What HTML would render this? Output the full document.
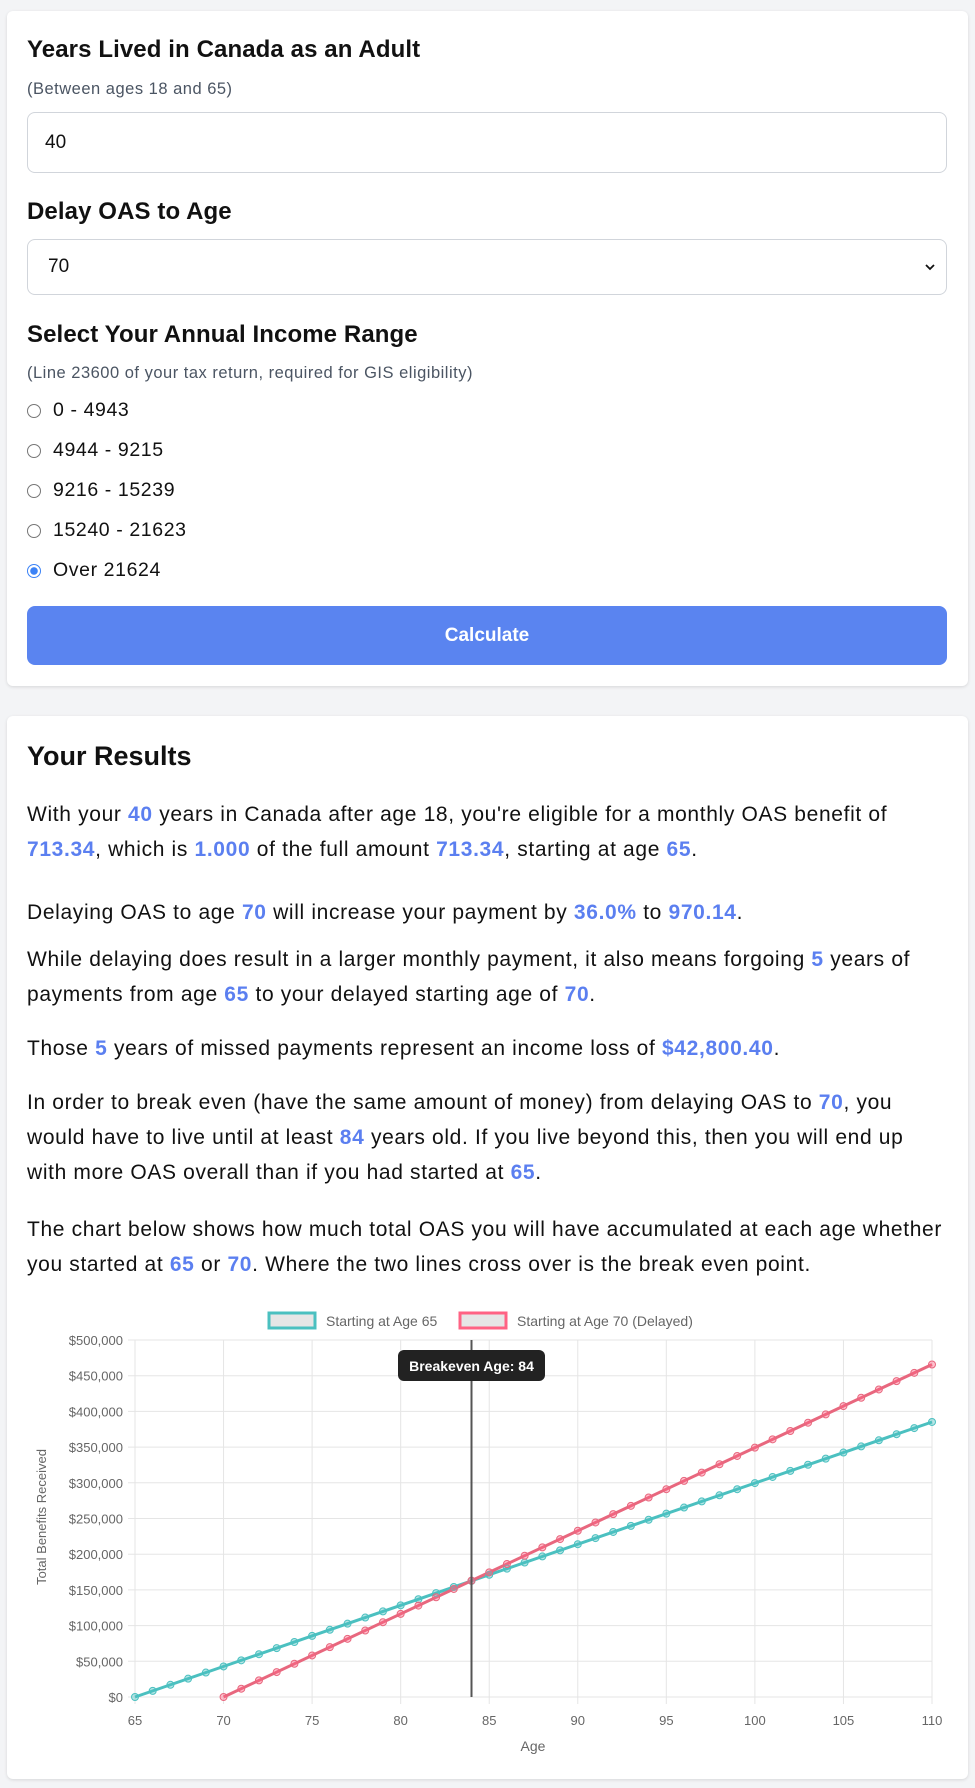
<!DOCTYPE html>
<html><head><meta charset="utf-8">
<style>
*{box-sizing:border-box;margin:0;padding:0}
body{width:975px;height:1788px;background:#f3f4f6;font-family:"Liberation Sans",Arial,sans-serif;color:#111;position:relative;overflow:hidden}
.card{position:absolute;left:7px;width:961px;background:#fff;border-radius:6px;box-shadow:0 1px 3px rgba(0,0,0,.12)}
.abs{position:absolute}
h2{font-size:24px;font-weight:700;color:#111;letter-spacing:0.1px}
.sub{font-size:16.5px;color:#4b5563;letter-spacing:0.5px}
.inp{position:absolute;left:27px;width:920px;border:1px solid #d1d5db;border-radius:8px;background:#fff;font-size:19px;padding-left:16px;display:flex;align-items:center}
.radio{position:absolute;left:27px;font-size:19.5px;letter-spacing:0.6px;display:flex;align-items:center}
.radio i{display:inline-block;width:14px;height:14px;border:1px solid #767676;border-radius:50%;margin-right:12px;background:#fff}
.radio i.on{border:1.5px solid #3b82f6;background:radial-gradient(circle,#3b82f6 0 3.5px,#fff 4px)}
.btn{position:absolute;left:27px;top:606px;width:920px;height:59px;background:#5a84f0;border-radius:8px;color:#fff;font-weight:700;font-size:19px;display:flex;align-items:center;justify-content:center}
p{position:absolute;left:27px;width:940px;font-size:21px;letter-spacing:0.65px;line-height:35px;color:#111;white-space:nowrap}
b{color:#5b7ff0}
</style></head><body>
<div class="card" style="top:11px;height:675px"></div>
<div class="abs" style="left:27px;top:36px"><h2>Years Lived in Canada as an Adult</h2></div>
<div class="abs sub" style="left:27px;top:80px">(Between ages 18 and 65)</div>
<div class="inp" style="top:112px;height:61px;padding-left:17px">40</div>
<div class="abs" style="left:27px;top:198px"><h2>Delay OAS to Age</h2></div>
<div class="inp" style="top:239px;height:56px;padding-left:20px">70<svg style="position:absolute;right:10px;top:22px" width="12" height="10"><path d="M2 3l4 4 4-4" stroke="#111" stroke-width="1.8" fill="none"/></svg></div>
<div class="abs" style="left:27px;top:321px"><h2>Select Your Annual Income Range</h2></div>
<div class="abs sub" style="left:27px;top:364px">(Line 23600 of your tax return, required for GIS eligibility)</div>
<div class="radio" style="top:399px"><i></i>0 - 4943</div>
<div class="radio" style="top:439px"><i></i>4944 - 9215</div>
<div class="radio" style="top:479px"><i></i>9216 - 15239</div>
<div class="radio" style="top:519px"><i></i>15240 - 21623</div>
<div class="radio" style="top:559px"><i class="on"></i>Over 21624</div>
<div class="btn">Calculate</div>

<div class="card" style="top:716px;height:1063px"></div>
<div class="abs" style="left:27px;top:741px;font-size:27px;font-weight:700">Your Results</div>
<p style="top:797px">With your <b>40</b> years in Canada after age 18, you're eligible for a monthly OAS benefit of<br><b>713.34</b>, which is <b>1.000</b> of the full amount <b>713.34</b>, starting at age <b>65</b>.</p>
<p style="top:895px">Delaying OAS to age <b>70</b> will increase your payment by <b>36.0%</b> to <b>970.14</b>.</p>
<p style="top:942px">While delaying does result in a larger monthly payment, it also means forgoing <b>5</b> years of<br>payments from age <b>65</b> to your delayed starting age of <b>70</b>.</p>
<p style="top:1031px">Those <b>5</b> years of missed payments represent an income loss of <b>$42,800.40</b>.</p>
<p style="top:1085px">In order to break even (have the same amount of money) from delaying OAS to <b>70</b>, you<br>would have to live until at least <b>84</b> years old. If you live beyond this, then you will end up<br>with more OAS overall than if you had started at <b>65</b>.</p>
<p style="top:1212px">The chart below shows how much total OAS you will have accumulated at each age whether<br>you started at <b>65</b> or <b>70</b>. Where the two lines cross over is the break even point.</p>

<svg id="ch" class="abs" style="left:0;top:0" width="975" height="1788" font-family="Liberation Sans,Arial,sans-serif">
<g stroke="#e5e5e5" stroke-width="1" id="grid"></g>
<g font-size="13" fill="#666" id="lab"></g>
<rect x="269" y="1313" width="46" height="15" fill="#e6e6e6" stroke="#4bc0c0" stroke-width="3"/>
<text x="326" y="1326" font-size="14" fill="#666">Starting at Age 65</text>
<rect x="460" y="1313" width="46" height="15" fill="#e6e6e6" stroke="#ff6384" stroke-width="3"/>
<text x="517" y="1326" font-size="14" fill="#666">Starting at Age 70 (Delayed)</text>
<text transform="translate(46,1517) rotate(-90)" text-anchor="middle" font-size="13" fill="#666">Total Benefits Received</text>
<text x="533" y="1751" text-anchor="middle" font-size="14" fill="#666">Age</text>
<line x1="135" y1="1697" x2="932" y2="1422" stroke="#4bc0c0" stroke-width="3"/>
<line x1="223.6" y1="1697" x2="932" y2="1364.5" stroke="#e8677e" stroke-width="3"/>
<g id="pts"></g>
<line x1="471.5" y1="1340" x2="471.5" y2="1697" stroke="#555" stroke-width="2"/>
<rect x="398" y="1350" width="147" height="31" rx="6" fill="#222"/>
<text x="471.5" y="1371" text-anchor="middle" font-size="14" font-weight="700" fill="#fff">Breakeven Age: 84</text>
</svg>
<script>
var ns="http://www.w3.org/2000/svg";
function el(p,t,a,txt){var e=document.createElementNS(ns,t);for(var k in a)e.setAttribute(k,a[k]);if(txt)e.textContent=txt;document.getElementById(p).appendChild(e);}
function X(a){return 135+(a-65)*797/45}
function Y(v){return 1697-v*357/500000}
for(var a=65;a<=110;a+=5){el("grid","line",{x1:X(a),y1:1340,x2:X(a),y2:1704});el("lab","text",{x:X(a),y:1725,"text-anchor":"middle"},String(a));}
for(var v=0;v<=500000;v+=50000){el("grid","line",{x1:128,y1:Y(v),x2:932,y2:Y(v)});el("lab","text",{x:123,y:Y(v)+5,"text-anchor":"end"},"$"+v.toLocaleString("en-US"));}
for(var a=65;a<=110;a++){el("pts","circle",{cx:X(a),cy:Y((a-65)*8560.08),r:3.5,fill:"rgba(75,192,192,.4)",stroke:"#4bc0c0"});}
for(var a=70;a<=110;a++){el("pts","circle",{cx:X(a),cy:Y((a-70)*11641.68),r:3.5,fill:"rgba(255,99,132,.4)",stroke:"#e8677e"});}
</script>
</body></html>
